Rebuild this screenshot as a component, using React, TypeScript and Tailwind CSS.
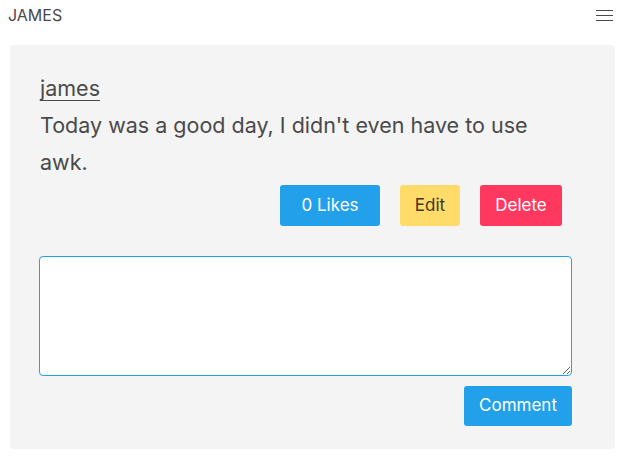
export default function App() {
  return (
    <div className="h-[462px] w-[630px] bg-white text-[#4a4a4a]" style={{ fontFamily: 'Inter, "Noto Sans", sans-serif' }}>
      <header className="flex h-[30px] items-center justify-between pl-[8px] pr-[17px]">
        <span className="text-[16px] leading-none">JAMES</span>
        <svg width="17" height="11" viewBox="0 0 17 11" className="text-[#4a4a4a]">
          <path d="M0 0.5h17M0 5.5h17M0 10.5h17" stroke="currentColor" strokeWidth="1" />
        </svg>
      </header>
      <div className="mx-[10px] mt-[15px] h-[404px] w-[605px] rounded-[4px] bg-[#f4f4f4] pl-[30px] pt-[25px]">
        <div className="w-[532px]">
          <a className="text-[21.5px] leading-[37px] underline underline-offset-[4px] decoration-1">james</a>
          <p className="text-[21.5px] leading-[37px]">Today was a good day, I didn't even have to use awk.</p>
          <div className="mt-[4px] flex justify-end pr-[10px]">
            <button className="h-[41px] w-[100px] rounded-[3px] bg-[#23a0ea] text-[17px] text-white">0 Likes</button>
            <button className="ml-[20px] h-[41px] w-[60px] rounded-[3px] bg-[#ffdb6a] text-[17px] text-[#3d3520]">Edit</button>
            <button className="ml-[20px] h-[41px] w-[82px] rounded-[3px] bg-[#ff3860] text-[17px] text-white">Delete</button>
          </div>
          <textarea className="mt-[30px] block h-[120px] w-[533px] -ml-[1px] rounded-[4px] border border-[#23a0ea] bg-white outline-none"></textarea>
          <div className="mt-[10px] flex justify-end">
            <button className="h-[40px] w-[108px] rounded-[3px] bg-[#23a0ea] text-[17px] text-white">Comment</button>
          </div>
        </div>
      </div>
    </div>
  );
}
